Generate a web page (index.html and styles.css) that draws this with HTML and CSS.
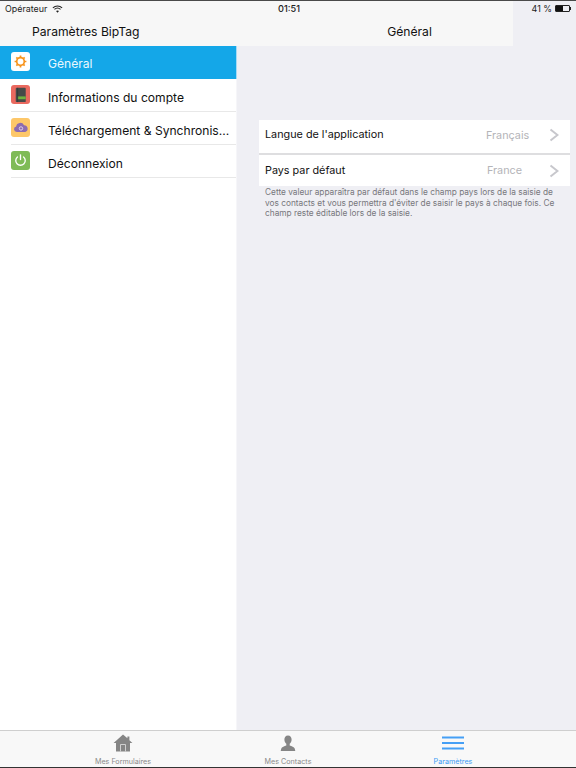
FILE: index.html
```html
<!DOCTYPE html>
<html lang="fr">
<head>
<meta charset="utf-8">
<title>Paramètres BipTag</title>
<link rel="stylesheet" href="styles.css">
</head>
<body>
<div class="screen">
  <div class="columns">
    <aside class="master">
      <header class="master-nav"><h1 class="master-title">Paramètres BipTag</h1></header>
      <ul class="menu">
        <li class="menu-row selected">
          <span class="tile tile-white">
            <svg viewBox="0 0 20 20" width="19" height="19"><g fill="none" stroke="#f7941d"><circle cx="10" cy="10" r="4" stroke-width="1.800"/><path stroke-width="1.800" d="M10 3.800v2M10 14.200v2M3.800 10h2M14.200 10h2M5.600 5.600l1.400 1.400M13 13l1.400 1.400M5.600 14.400 7 13M13 7l1.400-1.400"/></g></svg>
          </span>
          <span class="menu-label">Général</span>
        </li>
        <li class="menu-row">
          <span class="tile tile-red">
            <svg viewBox="0 0 20 20" width="19" height="19"><rect x="5" y="3" width="10.500" height="15" rx="1" fill="#454a48"/><rect x="7" y="12" width="8.500" height="3" fill="#6fb23f"/><path d="M7 3v15" stroke="#2f3332" stroke-width=".8"/></svg>
          </span>
          <span class="menu-label">Informations du compte</span>
        </li>
        <li class="menu-row">
          <span class="tile tile-yellow">
            <svg viewBox="0 0 20 20" width="19" height="19"><path fill="#8d6bb0" d="M6.200 14.800a3 3 0 0 1-.8-5.900 4.400 4.400 0 0 1 8.300-1.300 3.700 3.700 0 0 1 1.300 7.200z"/><circle cx="10.500" cy="11" r="1.800" fill="none" stroke="#e9dff0" stroke-width=".9"/></svg>
          </span>
          <span class="menu-label">Téléchargement &amp; Synchronis...</span>
        </li>
        <li class="menu-row">
          <span class="tile tile-green">
            <svg viewBox="0 0 20 20" width="19" height="19"><g fill="none" stroke="#fff" stroke-width="1.400" stroke-linecap="round"><path d="M6.800 6.200a5 5 0 1 0 6.400 0"/><path d="M10 4v5"/></g></svg>
          </span>
          <span class="menu-label">Déconnexion</span>
        </li>
      </ul>
    </aside>
    <main class="detail">
      <div class="detail-head">
        <header class="detail-nav"><h2 class="detail-title">Général</h2></header>
      </div>
      <section class="group">
        <div class="setting setting-first">
          <span class="setting-name">Langue de l'application</span>
          <span class="setting-value">Français</span>
          <svg class="chevron" viewBox="0 0 10 14" width="10" height="14"><path d="M1.500 1.500 8.500 7l-7 5.500" fill="none" stroke="#c7c7cc" stroke-width="2"/></svg>
        </div>
        <div class="setting">
          <span class="setting-name">Pays par défaut</span>
          <span class="setting-value setting-value-short">France</span>
          <svg class="chevron" viewBox="0 0 10 14" width="10" height="14"><path d="M1.500 1.500 8.500 7l-7 5.500" fill="none" stroke="#c7c7cc" stroke-width="2"/></svg>
        </div>
        <p class="note">Cette valeur apparaîtra par défaut dans le champ pays lors de la saisie de vos contacts et vous permettra d'éviter de saisir le pays à chaque fois. Ce champ reste éditable lors de la saisie.</p>
      </section>
    </main>
  </div>
  <nav class="tabbar">
    <div class="tab">
      <svg viewBox="0 0 20 20" width="20" height="20"><path fill="#858585" d="M10 1.500.6 10h2.400v8.500h14V10h2.400l-3-2.800V3.500h-2v1.800z"/><path fill="none" stroke="#d8d8d8" stroke-width=".9" d="M7.500 18.500v-7h5v7"/></svg>
      <span class="tab-label">Mes Formulaires</span>
    </div>
    <div class="tab">
      <svg viewBox="0 0 20 20" width="20" height="20"><path fill="#858585" d="M10 2.500c-2.400 0-3.600 1.800-3.600 4 0 2 .9 3.400 1.900 4.300v1.700c-1.800.8-4.600 1.500-5 3l-.6 2.500h14.600l-.6-2.500c-.4-1.500-3.200-2.200-5-3v-1.700c1-.9 1.900-2.300 1.900-4.300 0-2.200-1.200-4-3.600-4z"/></svg>
      <span class="tab-label">Mes Contacts</span>
    </div>
    <div class="tab tab-active">
      <svg viewBox="0 0 22 20" width="22" height="20"><path fill="none" stroke="#459ff5" stroke-width="1.800" d="M0 4.500h22M0 10h22M0 15.500h22"/></svg>
      <span class="tab-label">Paramètres</span>
    </div>
  </nav>
  <div class="status">
    <div class="status-left">
      <span>Opérateur</span>
      <svg viewBox="0 0 12 9" width="11" height="8"><g fill="none" stroke="#222" stroke-width="1.200"><path d="M.8 3.200a7.500 7.500 0 0 1 10.400 0"/><path d="M2.600 5a5 5 0 0 1 6.800 0"/></g><path d="M6 8.800 4.300 6.800a2.600 2.600 0 0 1 3.400 0z" fill="#222"/></svg>
    </div>
    <div class="status-time">01:51</div>
    <div class="status-right">
      <span>41 %</span>
      <span class="battery"><span class="battery-level"></span></span>
      <span class="battery-tip"></span>
    </div>
  </div>
</div>
</body>
</html>
```
FILE: styles.css
```css
* { box-sizing: border-box; margin: 0; padding: 0; }
html, body { width: 576px; height: 768px; overflow: hidden; }
body { font-family: "Inter", "Liberation Sans", sans-serif; color: #111; background: #efeff4; }

.screen {
  position: relative;
  width: 576px;
  height: 768px;
  display: flex;
  flex-direction: column;
  border-top: 1px solid #4a4a4a;
  border-bottom: 1px solid #333;
}

.columns { flex: 1; display: flex; min-height: 0; }

.master {
  position: relative;
  width: 236px;
  flex: none;
  display: flex;
  flex-direction: column;
}
.master-nav {
  height: 45px;
  background: #f7f7f7;
  padding: 22px 0 0 32px;
}
.master-title { font-size: 12.150px; line-height: 18px; font-weight: 400; }

.menu { list-style: none; flex: 1; background: #fff; box-shadow: 1px 0 0 #f6f6f9; }
.menu-row {
  height: 33px;
  display: flex;
  align-items: center;
  position: relative;
  padding: 3px 0 0 48px;
  font-size: 12.100px;
}
.menu-row::after {
  content: "";
  position: absolute;
  left: 11px;
  right: 0;
  bottom: 0;
  height: 1px;
  background: #e8e8e8;
}
.menu-row.selected { padding-top: 2px; background: #14a7e8; color: #e9f7fe; box-shadow: 1px 0 0 #a5dbf6; }
.menu-row.selected::after { display: none; }
.menu-label { white-space: nowrap; }
.tile {
  position: absolute;
  left: 11px;
  top: 6px;
  width: 19px;
  height: 19px;
  border-radius: 3px;
  display: block;
}
.tile svg { display: block; }
.tile-white { background: #fff; }
.tile-red { background: #e9695f; }
.tile-yellow { background: #fdc769; }
.tile-green { background: #7fbb57; }

.detail { flex: 1; min-width: 0; background: #efeff4; }
.detail-head { height: 45px; }
.detail-nav { width: 277px; height: 45px; background: #f7f7f7; text-align: center; padding: 22px 0 0 70px; }
.detail-title { font-size: 12.150px; line-height: 18px; font-weight: 400; }

.group { margin: 74px 6px 0 23px; }
.setting {
  height: 31px;
  background: #fff;
  display: grid;
  grid-template-columns: 221px 63px 1fr;
  align-items: center;
  padding-left: 6px;
}
.setting-first { height: 35px; border-bottom: 2px solid #dedee0; padding-bottom: 3px; }
.setting-first .setting-name { margin-bottom: 2px; }
.setting-name { font-size: 10.800px; white-space: nowrap; }
.setting-value { font-size: 10.800px; color: #b4b4b8; }
.setting-value-short { padding-left: 1px; }
.note {
  font-size: 8.300px;
  line-height: 10.500px;
  color: #77777c;
  padding: 1px 6px 0;
}

.tabbar {
  height: 37px;
  flex: none;
  background: #f8f8f8;
  border-top: 1px solid #cfcfcf;
  display: grid;
  grid-template-columns: 246px 84px 246px;
}
.tab { display: flex; flex-direction: column; align-items: center; color: #8a8a8a; padding-top: 2px; }
.tab svg { display: block; margin-bottom: 3.500px; }
.tab-label { font-size: 7.200px; line-height: 9px; white-space: nowrap; }
.tab-active { color: #3c9bf5; }

.status {
  position: absolute;
  top: 0;
  left: 0;
  right: 0;
  height: 15px;
  font-size: 8.900px;
  display: grid;
  grid-template-columns: 1fr 1fr 1fr;
  align-items: center;
  padding: 0 5px;
  color: #222;
}
.status-left { display: flex; align-items: center; gap: 5px; }
.status-time { text-align: center; font-weight: 500; font-size: 9.200px; padding-left: 2px; }
.status-right { display: flex; align-items: center; justify-content: flex-end; gap: 3px; }
.battery { width: 15px; height: 7px; border: 1px solid #222; border-radius: 1px; display: block; }
.battery-level { display: block; width: 7px; height: 5px; background: #111; }
.battery-tip { width: 1px; height: 3px; background: #222; margin-left: -3px; }
```
